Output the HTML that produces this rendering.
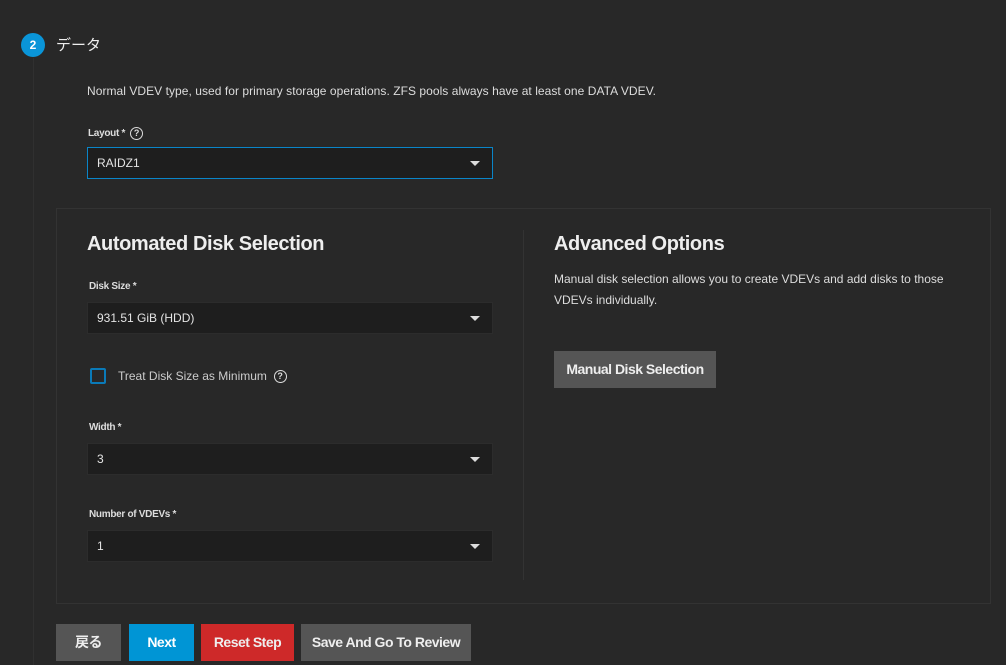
<!DOCTYPE html>
<html><head><meta charset="utf-8"><style>
*{box-sizing:border-box;margin:0;padding:0}
body{width:1006px;height:665px;background:#282828;font-family:"Liberation Sans","Noto Sans CJK JP",sans-serif;color:#e4e4e4;position:relative;overflow:hidden}
.abs{position:absolute}
.vline{left:33px;top:58px;width:1px;height:607px;background:#303030}
.circ{left:21px;top:33px;width:24px;height:24px;border-radius:50%;background:#0a95d8;color:#fff;font-size:12px;font-weight:bold;text-align:center;line-height:24px}
.lbl{font-size:10px;font-weight:bold;color:#ddd;letter-spacing:-0.3px}
.sel{height:32px;background:#1e1e1e;border:1px solid #2c2c2c;font-size:12px;color:#e4e4e4;padding-left:9px;line-height:30px}
.sel:after{content:"";position:absolute;right:12px;top:13px;border-left:5px solid transparent;border-right:5px solid transparent;border-top:5px solid #ddd}
.q{display:inline-block;width:13px;height:13px;border:1.5px solid #ddd;border-radius:50%;font-size:9px;font-weight:bold;text-align:center;line-height:10px;color:#ddd;vertical-align:middle}
.btn{top:624px;height:37px;font-size:14px;font-weight:bold;color:#eee;text-align:center;line-height:37px;letter-spacing:-0.5px}
h2{position:absolute;font-size:20px;font-weight:bold;color:#eee;letter-spacing:-0.4px}
</style></head><body>
<div class="abs vline"></div>
<div class="abs circ">2</div>
<div class="abs" style="left:56px;top:34px;font-size:15px;color:#eee">データ</div>
<div class="abs" style="left:87px;top:84px;font-size:12px;color:#ddd;letter-spacing:0.05px">Normal VDEV type, used for primary storage operations. ZFS pools always have at least one DATA VDEV.</div>
<div class="abs lbl" style="left:88px;top:127px">Layout * &nbsp;<span class="q">?</span></div>
<div class="abs sel" style="left:87px;top:147px;width:406px;border:1px solid #0a85c8">RAIDZ1</div>
<div class="abs" style="left:56px;top:208px;width:935px;height:396px;border:1px solid #333"></div>
<div class="abs" style="left:523px;top:230px;width:1px;height:350px;background:#333"></div>
<h2 style="left:87px;top:233px">Automated Disk Selection</h2>
<div class="abs lbl" style="left:89px;top:281px">Disk Size *</div>
<div class="abs sel" style="left:87px;top:302px;width:406px">931.51 GiB (HDD)</div>
<div class="abs" style="left:90px;top:368px;width:16px;height:16px;border:2px solid #0a7ab8;border-radius:2px"></div>
<div class="abs" style="left:118px;top:369px;font-size:12px;color:#ccc">Treat Disk Size as Minimum &nbsp;<span class="q">?</span></div>
<div class="abs lbl" style="left:89px;top:422px">Width *</div>
<div class="abs sel" style="left:87px;top:443px;width:406px">3</div>
<div class="abs lbl" style="left:89px;top:509px">Number of VDEVs *</div>
<div class="abs sel" style="left:87px;top:530px;width:406px">1</div>
<h2 style="left:554px;top:233px">Advanced Options</h2>
<div class="abs" style="left:554px;top:269px;width:420px;font-size:12px;line-height:21px;color:#ddd">Manual disk selection allows you to create VDEVs and add disks to those VDEVs individually.</div>
<div class="abs" style="left:554px;top:351px;width:162px;height:37px;background:#555;font-size:14px;font-weight:bold;color:#eee;text-align:center;line-height:37px;letter-spacing:-0.5px">Manual Disk Selection</div>
<div class="abs btn" style="left:56px;width:65px;background:#555">戻る</div>
<div class="abs btn" style="left:129px;width:65px;background:#0095d5;color:#fff">Next</div>
<div class="abs btn" style="left:201px;width:93px;background:#ce2929">Reset Step</div>
<div class="abs btn" style="left:301px;width:170px;background:#555">Save And Go To Review</div>
</body></html>
